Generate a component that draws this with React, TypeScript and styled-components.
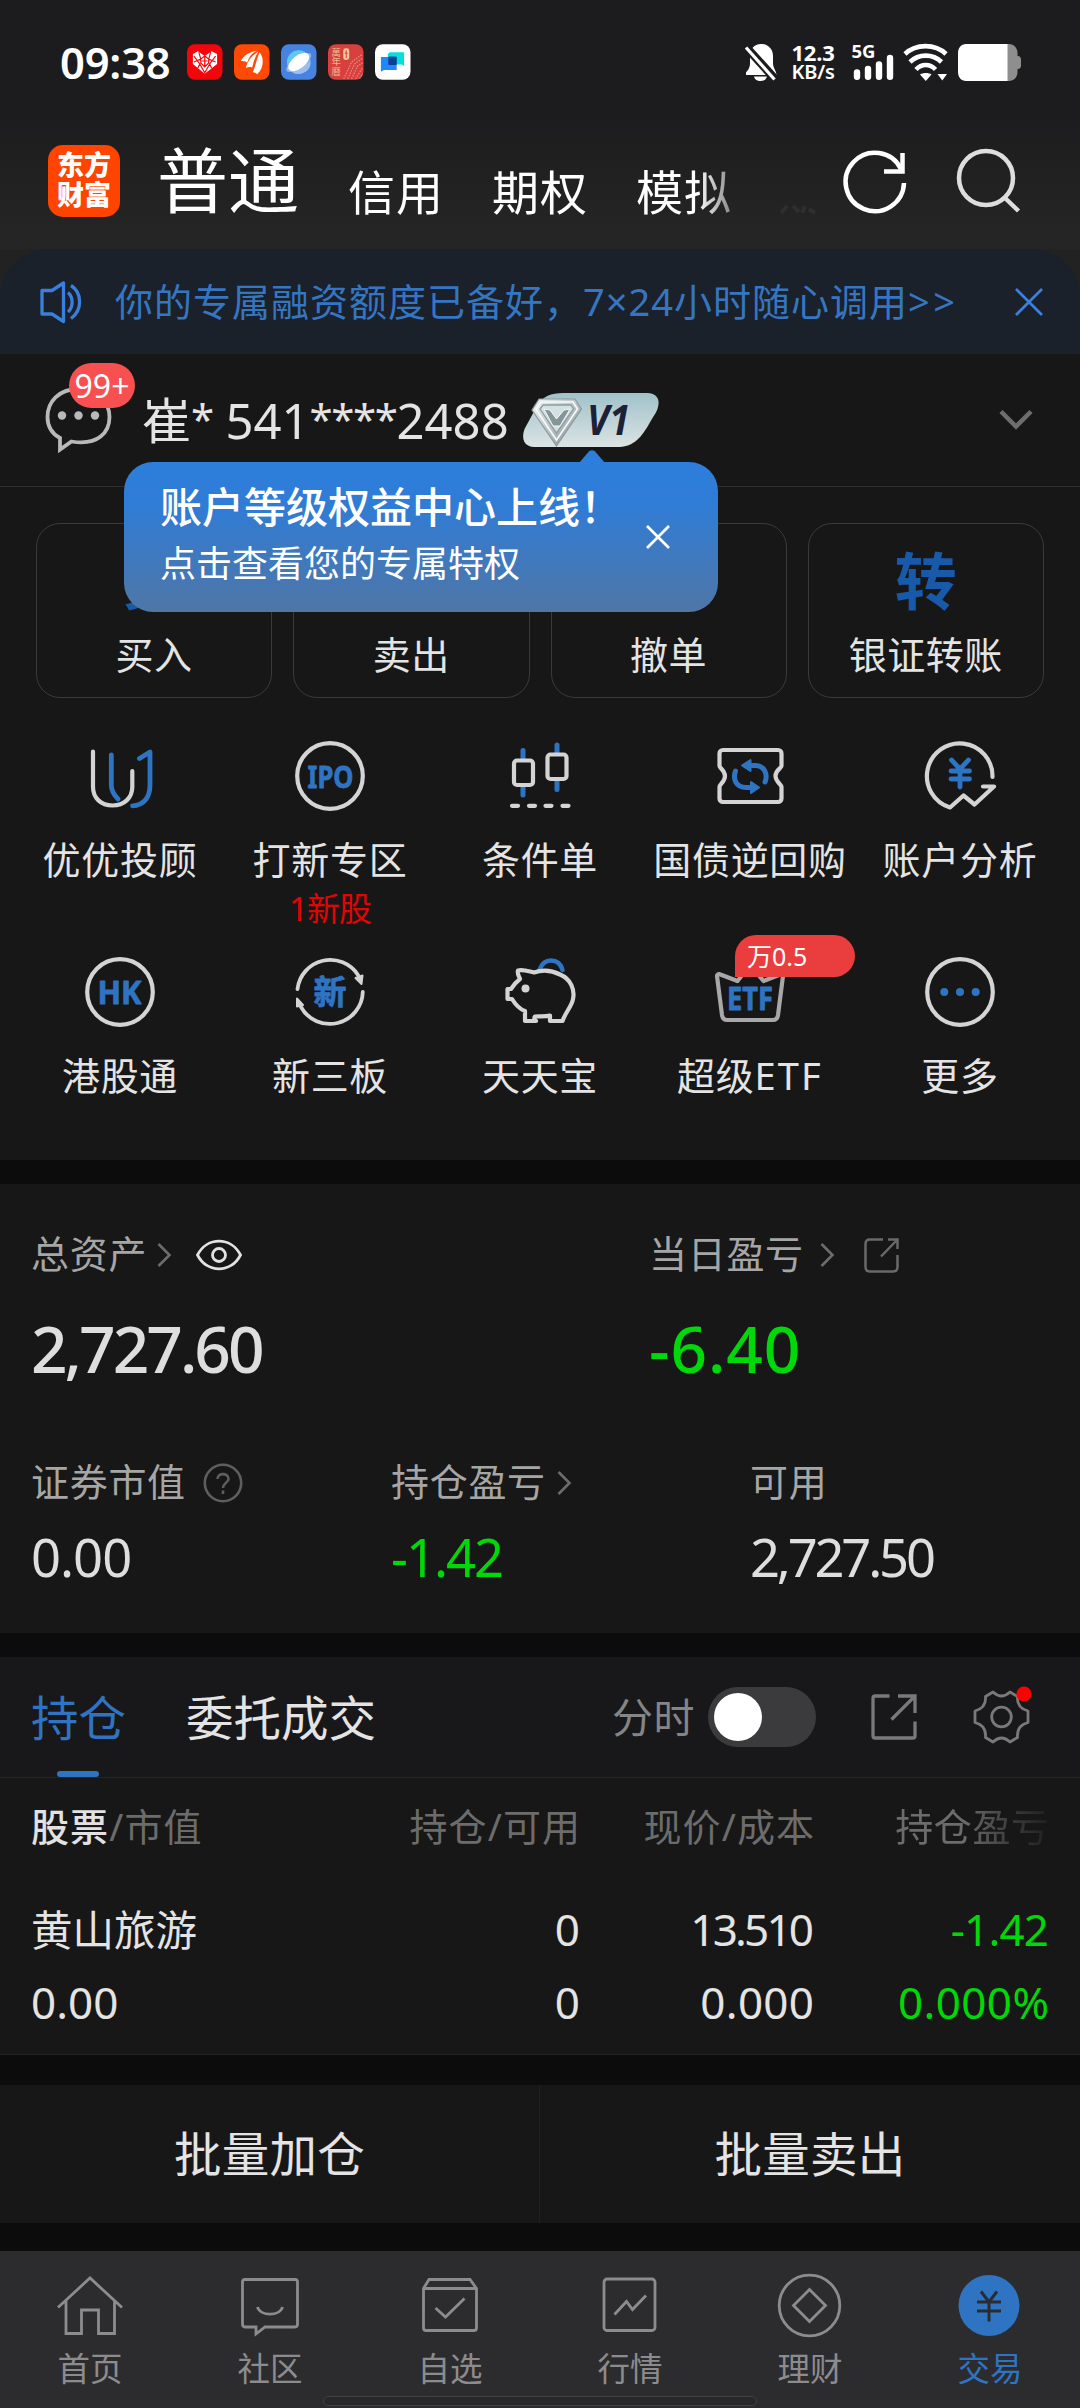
import React from "react";
import styled, { createGlobalStyle } from "styled-components";

const BLUE = "#2f74c2";
const LIGHT = "#e4e4e4";
const GREEN = "#00d80a";
const PANEL = "#171717";

const Global = createGlobalStyle`
  * { box-sizing: border-box; }
  body { margin: 0; background: #0c0c0c; }
  svg { display: block; flex: none; overflow: visible; }
`;

const Screen = styled.div`
  width: 1080px;
  height: 2408px;
  overflow: hidden;
  display: flex;
  flex-direction: column;
  background: #0c0c0c;
  font-family: "Noto Sans", "Noto Sans CJK SC", sans-serif;
  color: ${LIGHT};
  white-space: nowrap;
`;

const Txt = styled.span<{ $size: number; $color?: string; $ls?: number; $weight?: number }>`
  font-size: ${(p) => p.$size}px;
  line-height: ${(p) => Math.round(p.$size * 1.3)}px;
  color: ${(p) => p.$color ?? "inherit"};
  letter-spacing: ${(p) => p.$ls ?? 0}px;
  font-weight: ${(p) => p.$weight ?? 400};
`;

/* ---------- top area ---------- */
const Top = styled.header`
  height: 249px;
  flex: none;
  background: linear-gradient(#1c1c1e 0, #1c1c1e 110px, #252525 235px, #252525 100%);
`;

const StatusBar = styled.div`
  height: 124px;
  padding: 0 59px 0 60px;
  display: flex;
  align-items: center;
`;

const Clock = styled.div`
  width: 127px;
  font-size: 43.5px;
  font-weight: 600;
  line-height: 56px;
  letter-spacing: -0.2px;
  color: #fff;
`;

const AppIcons = styled.div`
  display: flex;
  gap: 11.4px;
`;

const StatusRight = styled.div`
  margin-left: auto;
  display: flex;
  align-items: center;
`;

const NetSpeed = styled.div`
  width: 46px;
  margin: 0 15px 0 13px;
  text-align: center;
  color: #fff;
  font-weight: 700;
  font-size: 22px;
  line-height: 20px;
  letter-spacing: -0.2px;
`;
const Unit = styled.div`
  font-size: 20px;
  font-weight: 600;
`;

const Header = styled.div`
  height: 125px;
  padding-left: 48px;
  padding-right: 60px;
  display: flex;
  align-items: flex-start;
`;

const Logo = styled.div`
  width: 72px;
  height: 72px;
  margin-top: 21px;
  border-radius: 15px;
  background: #ff4400;
  color: #fff;
  font-size: 27px;
  font-weight: 900;
  line-height: 30px;
  text-align: center;
  padding-top: 5px;
`;

const Tabs = styled.div`
  margin-left: 37px;
  width: 663px;
  height: 125px;
  display: flex;
  align-items: flex-start;
  color: #fff;
  mask-image: linear-gradient(90deg, #000 0, #000 540px, rgba(0, 0, 0, 0.45) 575px, rgba(0, 0, 0, 0.05) 605px, rgba(0, 0, 0, 0.05) 100%);
`;
const MainTab = styled.div`
  font-size: 71px;
  line-height: 92px;
  margin: 10px 49px 0 0;
`;
const SubTab = styled.div`
  font-size: 47px;
  letter-spacing: 1px;
  line-height: 60px;
  margin: 38px 48px 0 0;
`;

const HeadIcons = styled.div`
  display: flex;
  gap: 48px;
  margin: 22px 0 0 22px;
`;

const BannerBack = styled.div`
  height: 105px;
  flex: none;
  background: #222;
`;
const Banner = styled.div`
  height: 105px;
  padding: 0 37px 0 40px;
  border-radius: 48px 48px 0 0;
  background: #1b212a;
  display: flex;
  align-items: center;
  justify-content: space-between;
`;
const BannerText = styled.div`
  flex: 1;
  padding: 0 0 2px 33px;
  font-size: 38px;
  letter-spacing: 1px;
  line-height: 50px;
  color: #3576c2;
`;
const Arrows = styled.span`
  letter-spacing: 3.5px;
`;

/* ---------- account ---------- */
const Account = styled.section`
  position: relative;
  height: 133px;
  flex: none;
  padding: 0 47px 0 45px;
  background: ${PANEL};
  border-bottom: 1.5px solid #2e2e2e;
  display: flex;
  align-items: center;
`;
const Bubble = styled.div`
  position: relative;
  width: 97px;
  height: 66px;
`;
const Count = styled.div`
  position: absolute;
  left: 24px;
  top: -24px;
  width: 66px;
  height: 45px;
  border-radius: 23px;
  background: #f85050;
  color: #fff;
  font-size: 32px;
  line-height: 45px;
  text-align: center;
`;
const Name = styled.div`
  width: 379px;
  font-size: 49px;
  line-height: 64px;
  letter-spacing: 0;
  color: ${LIGHT};
`;
const Stars = styled.span`
  font-size: 42px;
  line-height: 1;
  letter-spacing: -1.4px;
  vertical-align: 4px;
`;
const Tooltip = styled.div`
  position: absolute;
  z-index: 2;
  left: 124px;
  top: 108px;
  width: 594px;
  height: 150px;
  padding: 0 48px 0 36px;
  border-radius: 29px;
  background: linear-gradient(#2d7edc 0, #2f7cd6 28%, #4f76a6 100%);
  color: #fff;
  display: flex;
  align-items: center;
  justify-content: space-between;
`;
const TipText = styled.div`
  display: flex;
  flex-direction: column;
  margin-top: -8px;
  gap: 6px;
`;
const TipArrow = styled.svg`
  position: absolute;
  left: 455px;
  top: -12px;
`;

const Actions = styled.section`
  height: 211px;
  flex: none;
  padding: 36px 36px 0;
  background: ${PANEL};
  display: grid;
  grid-template-columns: repeat(4, 1fr);
  column-gap: 21px;
`;
const ActionCard = styled.div`
  height: 175px;
  border: 1.5px solid #3a3a3a;
  border-radius: 24px;
  padding: 19px 0 0;
  display: flex;
  flex-direction: column;
  align-items: center;
`;
const ActionGlyph = styled.div`
  height: 80px;
  font-size: 62px;
  line-height: 76px;
  font-weight: 700;
  color: #1959aa;
`;
const ActionLabel = styled.div`
  margin-top: 6px;
  font-size: 38px;
  letter-spacing: 0.5px;
  line-height: 50px;
`;

const Shortcuts = styled.section`
  height: 462px;
  flex: none;
  padding: 43px 15px 0;
  background: ${PANEL};
  display: grid;
  grid-template-columns: repeat(5, 1fr);
  grid-auto-rows: 216px;
`;
const Shortcut = styled.div`
  position: relative;
  display: flex;
  flex-direction: column;
  align-items: center;
`;
const ShortLabel = styled.div`
  margin-top: 23px;
  font-size: 38px;
  letter-spacing: 0.7px;
  line-height: 50px;
`;
const Latin = styled.span`
  letter-spacing: 2.2px;
`;
const ShortNote = styled.div`
  font-size: 33px;
  line-height: 49px;
  letter-spacing: -1px;
  color: #e00505;
`;
const ShortBadge = styled.div`
  position: absolute;
  left: 90px;
  top: -22px;
  width: 120px;
  height: 42px;
  padding-left: 12px;
  border-radius: 21px 21px 21px 0;
  background: #ea3d3d;
  color: #fff;
  font-size: 25px;
  line-height: 42px;
`;

/* ---------- assets ---------- */
const Assets = styled.section`
  height: 449px;
  flex: none;
  margin-top: 24px;
  padding: 46px 0 0 31px;
  background: ${PANEL};
`;
const AssetRow = styled.div<{ $cols: string }>`
  display: grid;
  grid-template-columns: ${(p) => p.$cols};
`;
const LabelLine = styled.div`
  height: 50px;
  display: flex;
  align-items: center;
`;
const LabelText = styled.span`
  padding-bottom: 4px;
  font-size: 38px;
  line-height: 50px;
  letter-spacing: 0.7px;
  color: #a6a6a6;
`;
const BigValue = styled.div<{ $color?: string; $ls: number }>`
  height: 84px;
  margin: 27px 0 67px;
  font-size: 64px;
  line-height: 84px;
  font-weight: 500;
  letter-spacing: ${(p) => p.$ls}px;
  color: ${(p) => p.$color ?? "#dedede"};
`;
const MidValue = styled.div<{ $color?: string; $ls: number }>`
  height: 70px;
  margin-top: 14px;
  font-size: 52.5px;
  line-height: 70px;
  letter-spacing: ${(p) => p.$ls}px;
  color: ${(p) => p.$color ?? "#dedede"};
`;
const IconGap = styled.span<{ $w: number }>`
  width: ${(p) => p.$w}px;
`;

/* ---------- positions ---------- */
const PosBar = styled.section`
  height: 121px;
  flex: none;
  margin-top: 24px;
  padding: 0 51px 0 31px;
  background: #18181a;
  border-bottom: 1.5px solid #262628;
  display: flex;
  align-items: center;
`;
const PosTab = styled.div<{ $active?: boolean }>`
  height: 120px;
  display: flex;
  flex-direction: column;
  align-items: center;
  justify-content: space-between;
  margin-right: 60px;
  padding-top: 30px;
  font-size: 47.5px;
  line-height: 62px;
  color: ${(p) => (p.$active ? BLUE : LIGHT)};
`;
const Underline = styled.i`
  width: 42px;
  height: 6px;
  margin-right: 2px;
  border-radius: 3px;
  background: ${BLUE};
`;
const Switch = styled.div`
  width: 108px;
  height: 60px;
  margin: 0 55px 0 13px;
  padding: 6px;
  border-radius: 30px;
  background: #3b3b3d;
`;
const Knob = styled.div`
  width: 48px;
  height: 48px;
  border-radius: 50%;
  background: #fff;
`;
const PosTools = styled.div`
  margin-left: auto;
  display: flex;
  align-items: center;
`;
const Table = styled.section`
  height: 277px;
  flex: none;
  padding: 15px 31px 0;
  background: ${PANEL};
  border-bottom: 1.5px solid #222;
`;
const TableRow = styled.div<{ $h: number; $gap?: number }>`
  height: ${(p) => p.$h}px;
  margin-top: ${(p) => p.$gap ?? 0}px;
  display: grid;
  grid-template-columns: 319px 230px 234px 235px;
  align-items: center;
`;
const Cell = styled.div<{ $size: number; $color?: string; $ls?: number; $left?: boolean }>`
  font-size: ${(p) => p.$size}px;
  line-height: ${(p) => Math.round(p.$size * 1.3)}px;
  color: ${(p) => p.$color ?? "#e4e4e4"};
  letter-spacing: ${(p) => p.$ls ?? 0}px;
  margin-right: ${(p) => -Math.max(0, p.$ls ?? 0)}px;
  padding-right: ${(p) => Math.max(0, -(p.$ls ?? 0))}px;
  text-align: ${(p) => (p.$left ? "left" : "right")};
`;
const FadeCell = styled(Cell)`
  mask-image: linear-gradient(90deg, #000 0, #000 150px, rgba(0, 0, 0, 0.45) 195px, rgba(0, 0, 0, 0.1) 100%);
`;
const Strong = styled.span`
  color: #e2e2e2;
  font-weight: 500;
`;

const Batch = styled.section`
  height: 138px;
  flex: none;
  margin-top: 30px;
  display: grid;
  grid-template-columns: 1fr 1fr;
  background: ${PANEL};
`;
const BatchButton = styled.div<{ $divided?: boolean }>`
  display: flex;
  align-items: center;
  justify-content: center;
  font-size: 47.5px;
  line-height: 62px;
  letter-spacing: 0.3px;
  border-right: ${(p) => (p.$divided ? "1px solid #202020" : "none")};
`;

/* ---------- bottom navigation ---------- */
const Nav = styled.nav`
  position: relative;
  height: 157px;
  flex: none;
  margin-top: 28px;
  padding-top: 22px;
  background: #2c2c2e;
  display: grid;
  grid-template-columns: repeat(6, 1fr);
`;
const NavItem = styled.div<{ $active?: boolean }>`
  display: flex;
  flex-direction: column;
  align-items: center;
  gap: 8px;
  color: ${(p) => (p.$active ? BLUE : "#8c8c8e")};
  font-size: 32.5px;
  line-height: 44px;
`;
const HomeBar = styled.div`
  position: absolute;
  left: 323px;
  bottom: 2px;
  width: 434px;
  height: 10px;
  border-radius: 5px;
  background: #282829;
  border: 1.5px solid #414143;
`;

/* ---------- icons ---------- */
const BadgeText = ({ x, y, size, len, children }: { x: number; y: number; size: number; len: number; children: string }) => (
  <text x={x} y={y} fontSize={size} textLength={len} lengthAdjust="spacingAndGlyphs" fontWeight={700} fill={BLUE}
    stroke={BLUE} strokeWidth="0.8" fontFamily='"Noto Sans", "Noto Sans CJK SC", sans-serif'>{children}</text>
);

const Ring = () => <circle cx="35" cy="35" r="32.8" />;

const icons: Record<string, React.ReactNode> = {
  uu: (
    <>
      <path d="M8 10.5V46C8 57 16 64.5 27.5 64.5S47.3 57 47.3 46V30" />
      <path stroke={BLUE} strokeWidth="4.8" d="M26.3 14V44C26.3 50 29 54 33 58M54.5 17.5L65 11V44C65 56 59 64.5 47.5 64.8" />
    </>
  ),
  ipo: (
    <>
      <Ring />
      <BadgeText x={12.5} y={46.5} size={31} len={46}>IPO</BadgeText>
    </>
  ),
  cond: (
    <>
      <path stroke={BLUE} strokeWidth="5" d="M18 9.5V18M18 45V54M52 4V12M52 40V48.5" />
      <rect x="9" y="19.5" width="19" height="24.5" rx="3" />
      <rect x="42.5" y="13.5" width="19" height="24.5" rx="3" />
      <path d="M7 64.8H13M24 64.8H30M40.5 64.8H46.5M57.5 64.8H63.5" />
    </>
  ),
  bond: (
    <>
      <path d="M8 9H63C65 9 66.5 10.5 66.5 12.5V25C66.5 27 60.5 29 60.5 35S66.5 43 66.5 46V57.5C66.5 59.5 65 61 63 61H8C6 61 4.5 59.5 4.5 57.5V46C4.5 43 10 41 10 35S4.5 27 4.5 25V12.5C4.5 10.5 6 9 8 9Z" />
      <path stroke={BLUE} strokeWidth="5" d="M50 41C53 34 50 24.5 40 24.5H33M20.5 30C17.5 38 21 46.5 31 46.5H38" />
      <path fill={BLUE} stroke={BLUE} strokeWidth="2" d="M27 24.5L35.5 19V30ZM44 46.5L36 41V52Z" />
    </>
  ),
  analysis: (
    <>
      <path d="M67.5 36A32.8 32.8 0 1 0 25 66.5L38.5 54.5L49.5 63.5L69 45.5H58" />
      <path stroke={BLUE} strokeWidth="4.8" d="M26.5 19L35 28L43.5 19M35 28V46M26 30H44.5M26 38H44.5" />
    </>
  ),
  hk: (
    <>
      <Ring />
      <BadgeText x={12.5} y={46.5} size={31.5} len={44}>HK</BadgeText>
    </>
  ),
  xsb: (
    <>
      <path strokeWidth="3.8" d="M2.5 32A33 33 0 0 1 63 18M67.8 35A33 33 0 0 1 6 50" />
      <path strokeWidth="2" fill="#d4d4d4" d="M67.5 18.5L66.5 27L60.5 21ZM2 41.5L8 48L2 49.5Z" />
      <BadgeText x={18.5} y={47} size={33} len={33}>新</BadgeText>
    </>
  ),
  pig: (
    <>
      <path stroke={BLUE} strokeWidth="4.5" d="M34.5 13C37 5.5 42 3.5 46 3.5C52 3.5 56 7.5 57.5 13" />
      <path d="M13 13.5C18 12 24 14.5 29 15.5C38 12.5 47 13.5 55 17.5C66 22 70 33 68 42C67 49 60 56 57.5 64H45V58.5C40 60 34 59 30 59.5C29 61 29 63 31 64H20V54C14 52 9.5 46 7 42H2.5V32H6C8 29 11 25 15 22C14 19 12 17 13 13.5Z" />
      <circle cx="20.5" cy="31.5" r="4" fill="#d4d4d4" stroke="none" />
    </>
  ),
  etf: (
    <>
      <path stroke="#a8a8a8" d="M4 17L22.5 24L35 8L48.5 24L66.5 17C67.5 17 68 18 68 19L63 58C62.5 61 61 63 58 63H12C9 63 7.5 61 7 58L2 19C2 18 3 17 4 17Z" />
      <BadgeText x={12} y={52.5} size={31.5} len={46}>ETF</BadgeText>
    </>
  ),
  more: (
    <>
      <Ring />
      <g fill={BLUE} stroke="none">
        <circle cx="19.3" cy="35" r="4" />
        <circle cx="35" cy="35" r="4" />
        <circle cx="50.7" cy="35" r="4" />
      </g>
    </>
  ),
};

const ShortIcon = ({ name }: { name: string }) => (
  <svg width="70" height="70" viewBox="0 0 70 70" fill="none" stroke="#d4d4d4" strokeWidth="4.2" strokeLinecap="round" strokeLinejoin="round">
    {icons[name]}
  </svg>
);

const Chevron = () => (
  <svg width="14" height="24" viewBox="0 0 14 24" fill="none" stroke="#6c6c6c" strokeWidth="2.6">
    <path d="M1.5 1L12.5 12L1.5 23" />
  </svg>
);

const navIcons: Record<string, React.ReactNode> = {
  home: <path d="M1 34.5L33 5L65 34.5M9 28V60.5H24.5V37H41.5V60.5H57.5V28" />,
  social: (
    <>
      <path d="M8 6.5H58C60 6.5 60.5 7.5 60.5 9V51C60.5 53 60 54 58 54H28L19 61V54H8C6 54 5.5 53 5.5 51V9C5.5 7.5 6 6.5 8 6.5Z" />
      <path d="M20.5 34C23 43.5 43 43.5 45.5 34" />
    </>
  ),
  pick: <path d="M6.5 15.5L12 6.5H53L59.5 15.5V55C59.5 56.5 59 57.5 57 57.5H9C7 57.5 6.5 56.5 6.5 55ZM6.5 15.5H59.5M18.5 35L28.5 44L47.5 25.5" />,
  market: (
    <>
      <rect x="7" y="6" width="51" height="51.5" rx="3" />
      <path d="M17.5 41.5L29.5 28.5L35.5 36.5L49 22.5" />
    </>
  ),
  wealth: (
    <>
      <circle cx="32.5" cy="32.5" r="30.3" />
      <path d="M32.5 16.5L48.5 32.5L32.5 48.5L16.5 32.5Z" />
    </>
  ),
  trade: (
    <>
      <circle cx="32" cy="32.5" r="30.5" fill="#2f74c2" stroke="none" />
      <path stroke="#2a2c30" strokeWidth="3" d="M24 18.5L32 29L40 18.5M32 29V48.5M20 29H44M20 38H44" />
    </>
  ),
};

const StatusAppIcons = () => (
  <AppIcons>
    <svg width="35.5" height="36" viewBox="0 0 36 36">
      <rect width="36" height="36" rx="8" fill="#f2060c" />
      <path fill="#fff" d="M18 30L6 20V10L11 7L18 12L25 7L30.5 10V20Z" />
      <path stroke="#f2060c" strokeWidth="1.2" fill="none" d="M7 12L13 20L11 24M29 12L23 20L25 24M12 8L14 15L7 18M24 8L22 15L29 18M14 15L18 12L22 15V19L18 23L14 19ZM13 20L18 29L23 20M18 13V22M15 17H21" />
    </svg>
    <svg width="35.5" height="36" viewBox="0 0 36 36">
      <rect width="36" height="36" rx="8" fill="#ff4a06" />
      <path fill="#fff" d="M7 17C10 11 16 8 23 6.5C17 10 15 14 13.5 18.5C11 17 9 17 7 17ZM12 24C14 16 19 11 25 7C21 13 20 18 18.5 23.5C16 23 14 23 12 24ZM19 28.5C22 22 23 14 26 8C31 15 30 24 23.5 30.5C22.5 29 21 28.5 19 28.5Z" />
    </svg>
    <svg width="35.5" height="36" viewBox="0 0 36 36">
      <rect width="36" height="36" rx="8" fill="#4682e0" />
      <circle cx="18" cy="18" r="12" fill="#62c6f5" />
      <path d="M9 26A12 12 0 0 0 30 18Z" fill="#9dbcf0" />
      <ellipse cx="18" cy="18.5" rx="15" ry="5.5" transform="rotate(-35 18 18.5)" fill="#8fb4ee" />
      <ellipse cx="18" cy="18" rx="12.5" ry="6.5" transform="rotate(-38 18 18)" fill="#fff" />
    </svg>
    <svg width="35.5" height="36" viewBox="0 0 36 36">
      <rect width="36" height="36" rx="8" fill="#d8403f" />
      <g fill="#f0b890" fontFamily='"Noto Sans CJK TC", sans-serif' fontSize="9.5">
        <text x="3.5" y="12">萬</text>
        <text x="3.5" y="21.5">年</text>
        <text x="3.5" y="31.5">曆</text>
      </g>
      <rect x="15.5" y="4" width="6" height="12" rx="2.5" fill="#f2c79b" />
      <path d="M18.5 6V14M17 9H20" stroke="#d8403f" strokeWidth="1" />
      <path d="M16 35L24 18L35 10M20 35L27 20L35 14M24 35L30 22L35 19M28 35L35 24M32 35L35 30" stroke="#ec8f78" strokeWidth="1.2" strokeDasharray="1.5 1.2" fill="none" />
    </svg>
    <svg width="35.5" height="36" viewBox="0 0 36 36">
      <rect width="36" height="36" rx="8" fill="#fff" />
      <path d="M15 8H29.5V22L27 20.5H13V10Z" fill="#06dede" />
      <path d="M6 13H22V26H9L6 28Z" fill="#2387f8" />
      <rect x="13.5" y="12.5" width="8.5" height="8.5" rx="1" fill="#0a3f96" />
    </svg>
  </AppIcons>
);

const actions = [
  { label: "买入", glyph: "买" },
  { label: "卖出" },
  { label: "撤单" },
  { label: "银证转账", glyph: "转" },
];

const shortcuts: { label: string; latin?: string; icon: string; note?: string; badge?: string }[] = [
  { label: "优优投顾", icon: "uu" },
  { label: "打新专区", icon: "ipo", note: "1新股" },
  { label: "条件单", icon: "cond" },
  { label: "国债逆回购", icon: "bond" },
  { label: "账户分析", icon: "analysis" },
  { label: "港股通", icon: "hk" },
  { label: "新三板", icon: "xsb" },
  { label: "天天宝", icon: "pig" },
  { label: "超级", latin: "ETF", icon: "etf", badge: "万0.5" },
  { label: "更多", icon: "more" },
];

const navItems = [
  { label: "首页", icon: "home" },
  { label: "社区", icon: "social" },
  { label: "自选", icon: "pick" },
  { label: "行情", icon: "market" },
  { label: "理财", icon: "wealth" },
  { label: "交易", icon: "trade", active: true },
];

export default function App() {
  return (
    <Screen>
      <Global />
      <Top>
        <StatusBar>
          <Clock>09:38</Clock>
          <StatusAppIcons />
          <StatusRight>
            <svg width="32" height="37" viewBox="0 0 32 37">
              <path fill="#fff" d="M16 0C23 0 28 5 28 12V19C28 24 31.5 27 31.5 31H1V28.5C3 26 5 24 5 19V12C5 5 9 0 16 0ZM9 32.5H22C21 36 18.5 37 15.5 37S10 36 9 32.5Z" />
              <path stroke="#1c1c1e" strokeWidth="8.5" d="M1 3L31 36" />
              <path stroke="#fff" strokeWidth="3.2" d="M1 3.5L29.5 35.5" />
            </svg>
            <NetSpeed>
              12.3
              <Unit>KB/s</Unit>
            </NetSpeed>
            <svg width="47" height="38" viewBox="0 0 47 38">
              <text x="0.5" y="15" fontSize="18.5" fontWeight="700" fill="#fff" textLength="24" lengthAdjust="spacingAndGlyphs">5G</text>
              <path stroke="#fff" strokeWidth="6.4" strokeLinecap="round" d="M6 29.5V33.8M17 26V33.8M28 21.5V33.8M39 15V33.8" />
            </svg>
            <svg width="50" height="37" viewBox="0 0 50 37" style={{ marginLeft: 5 }}>
              <g fill="none" stroke="#fff" strokeWidth="4.6" strokeLinecap="butt">
                <path d="M2 10C13 -0.5 32 -0.5 43 10" />
                <path d="M7 18C15.5 9.5 30 9.5 38.5 18" />
                <path d="M13 25.5C18.500 19.5 27 19.5 32.500 25.5" />
              </g>
              <path fill="#fff" d="M17 30.5C20 28.5 26 28.5 28.5 30.5L22.800 37ZM34.5 30H44L39.3 36.5Z" />
            </svg>
            <svg width="64" height="37" viewBox="0 0 64 37" style={{ marginLeft: 4 }}>
              <path fill="#8e8e8e" d="M48 0H52C57 0 60.5 4 60.5 9V12H61C63 12 64 14 64 15.5V21.5C64 23.5 63 25 61 25H60.5V28C60.5 33 57 37 52 37H48Z" />
              <path fill="#fff" d="M50.5 0H9C4 0 1 4 1 9V28C1 33 4 37 9 37H50.5Z" />
            </svg>
          </StatusRight>
        </StatusBar>
        <Header>
          <Logo>东方<br />财富</Logo>
          <Tabs>
            <MainTab>普通</MainTab>
            <SubTab>信用</SubTab>
            <SubTab>期权</SubTab>
            <SubTab>模拟</SubTab>
            <svg width="36" height="10" viewBox="0 0 36 10" style={{ marginTop: 81 }}>
              <path d="M7 1L1 8M13 1L19 7M25 1L22 8M29 4L35 8" stroke="#fff" strokeWidth="4" />
            </svg>
          </Tabs>
          <HeadIcons>
            <svg width="66" height="72" viewBox="843 146 66 72" fill="none" stroke="#fff" strokeWidth="4.5">
              <path d="M905 183A29.2 29.2 0 1 1 902 169" />
              <path d="M903.5 153V171.5H885" />
            </svg>
            <svg width="64" height="72" viewBox="957 146 64 72" fill="none" stroke="#dedede" strokeWidth="4.5">
              <circle cx="987" cy="178" r="27" />
              <path d="M1005 197L1019.5 211" />
            </svg>
          </HeadIcons>
        </Header>
      </Top>

      <BannerBack>
        <Banner>
          <svg width="42" height="42" viewBox="40 280 42 42" fill="none" stroke="#3a7fdb" strokeWidth="3.3" strokeLinejoin="round">
            <path d="M42 289.5H52L63.5 282V320.5L52 313H42Z" />
            <path d="M68 291.5C73.5 296.5 73.5 306 68 311M71 284.5C82.5 292 82.5 309 71 317.5" />
          </svg>
          <BannerText>
            你的专属融资额度已备好，7×24小时随心调用<Arrows>&gt;&gt;</Arrows>
          </BannerText>
          <svg width="28" height="28" viewBox="0 0 28 28" stroke="#3a80dd" strokeWidth="2.7">
            <path d="M1 1L27 27M27 1L1 27" />
          </svg>
        </Banner>
      </BannerBack>

      <Account>
        <Bubble>
          <svg width="67" height="66" viewBox="44.5 387 67 66" fill="none" stroke="#b9b9b9" strokeWidth="3.8">
            <path d="M78 389C58 389 47 402 47 417C47 427 52 434 59.5 438V449.5L71 441.5C98 446 109 432 109 417C109 402 97 389 78 389Z" />
            <g fill="#b9b9b9" stroke="none">
              <circle cx="61.5" cy="415.5" r="4.2" />
              <circle cx="78" cy="415.5" r="4.2" />
              <circle cx="94.5" cy="415.5" r="4.2" />
            </g>
          </svg>
          <Count>99+</Count>
        </Bubble>
        <Name>
          崔<Stars>*</Stars> 541<Stars>****</Stars>2488
        </Name>
        <svg width="140" height="56" viewBox="522 392 140 56">
          <defs>
            <linearGradient id="level" x1="0" y1="0" x2="0" y2="1">
              <stop offset="0" stopColor="#a0c2ca" />
              <stop offset="1" stopColor="#dbe3e4" />
            </linearGradient>
            <linearGradient id="gem" x1="0" y1="0" x2="1" y2="1">
              <stop offset="0" stopColor="#f2f7f8" />
              <stop offset="0.6" stopColor="#aeb8bb" />
              <stop offset="1" stopColor="#7d888d" />
            </linearGradient>
          </defs>
          <path fill="url(#level)" d="M564 393H648C657 393 661.5 399 659 407C658 412 654 417 650 424C641 440 633 447 618 447H536C525 447 522 439 525.5 429L538 406C544 396 552 393 564 393Z" />
          <path fill="url(#gem)" stroke="#8b979b" strokeWidth="1.2" d="M540 399H576L582.5 409L557.5 446L533 410Z" />
          <path fill="none" stroke="#f6fafa" strokeWidth="1.6" d="M542 402H574L578.5 409L557.5 440L537 409.5Z" />
          <path fill="#d4e1e3" stroke="#8f9ca0" strokeWidth="1.3" d="M544 405H572L574.5 409L557.5 433L541 409Z" />
          <path fill="#85969b" stroke="#f4f8f8" strokeWidth="1" d="M545 409L551 410L557.5 419L565 410L571 409L561 426H554Z" />
          <text x="588" y="435" fontSize="41" fontWeight="700" fontStyle="italic" fill="#1d2136" textLength="43" lengthAdjust="spacingAndGlyphs">V1</text>
        </svg>
        <svg width="34" height="22" viewBox="0 0 34 22" fill="none" stroke="#6e6e6e" strokeWidth="4.5" style={{ marginLeft: "auto" }}>
          <path d="M2 2.5L17 17.5L32 2.5" />
        </svg>
        <Tooltip>
          <TipArrow width="26" height="13" viewBox="0 0 26 13">
            <path fill="#2d7edc" d="M0 13L9 2.5C11 -0.5 15 -0.5 17 2.5L26 13Z" />
          </TipArrow>
          <TipText>
            <Txt $size={42} $weight={500}>账户等级权益中心上线！</Txt>
            <Txt $size={36}>点击查看您的专属特权</Txt>
          </TipText>
          <svg width="24" height="24" viewBox="0 0 24 24" stroke="#fff" strokeWidth="2.7">
            <path d="M1 1L23 23M23 1L1 23" />
          </svg>
        </Tooltip>
      </Account>

      <Actions>
        {actions.map((a) => (
          <ActionCard key={a.label}>
            <ActionGlyph>{a.glyph}</ActionGlyph>
            <ActionLabel>{a.label}</ActionLabel>
          </ActionCard>
        ))}
      </Actions>

      <Shortcuts>
        {shortcuts.map((s) => (
          <Shortcut key={s.label}>
            <ShortIcon name={s.icon} />
            <ShortLabel>
              {s.label}
              {s.latin && <Latin>{s.latin}</Latin>}
            </ShortLabel>
            {s.note && <ShortNote>{s.note}</ShortNote>}
            {s.badge && <ShortBadge>{s.badge}</ShortBadge>}
          </Shortcut>
        ))}
      </Shortcuts>

      <Assets>
        <AssetRow $cols="618px 1fr">
          <div>
            <LabelLine>
              <LabelText>总资产</LabelText>
              <IconGap $w={10} />
              <Chevron />
              <IconGap $w={25} />
              <svg width="46" height="32" viewBox="0 0 46 32" fill="none" stroke="#e2e2e2" strokeWidth="2.8">
                <path d="M1.5 16C11 -2.5 35 -2.5 44.5 16C35 34.5 11 34.5 1.5 16Z" />
                <circle cx="23" cy="16" r="6.5" />
              </svg>
            </LabelLine>
            <BigValue $ls={-3}>2,727.60</BigValue>
          </div>
          <div>
            <LabelLine>
              <LabelText>当日盈亏</LabelText>
              <IconGap $w={16} />
              <Chevron />
              <IconGap $w={30} />
              <svg width="35" height="35" viewBox="0 0 35 35" fill="none" stroke="#6a6a6a" strokeWidth="2.5">
                <path d="M19 1.5H6C3 1.5 1.5 3 1.5 6V29C1.5 32 3 33.5 6 33.5H29C32 33.5 33.5 32 33.5 29V17M17 18.5L32.5 2.5M24 1.5H33.5V11" />
              </svg>
            </LabelLine>
            <BigValue $ls={0.9} $color={GREEN}>-6.40</BigValue>
          </div>
        </AssetRow>
        <AssetRow $cols="360px 359px 1fr">
          <div>
            <LabelLine>
              <LabelText>证券市值</LabelText>
              <IconGap $w={17} />
              <svg width="40" height="40" viewBox="0 0 40 40" fill="none" stroke="#5e5e5e" strokeWidth="2.6">
                <circle cx="20" cy="20" r="18.2" />
                <path d="M14.5 16C14.5 9.5 25.5 9.5 25.5 16C25.5 19.5 20 20 20 25M20 27.5V31" />
              </svg>
            </LabelLine>
            <MidValue $ls={-1}>0.00</MidValue>
          </div>
          <div>
            <LabelLine>
              <LabelText>持仓盈亏</LabelText>
              <IconGap $w={11} />
              <Chevron />
            </LabelLine>
            <MidValue $ls={-2} $color={GREEN}>-1.42</MidValue>
          </div>
          <div>
            <LabelLine>
              <LabelText>可用</LabelText>
            </LabelLine>
            <MidValue $ls={-3.2}>2,727.50</MidValue>
          </div>
        </AssetRow>
      </Assets>

      <PosBar>
        <PosTab $active>
          持仓
          <Underline />
        </PosTab>
        <PosTab>委托成交</PosTab>
        <PosTools>
          <Txt $size={41} $ls={0.5} $color="#858585">分时</Txt>
          <Switch>
            <Knob />
          </Switch>
          <svg width="46" height="46" viewBox="0 0 46 46" fill="none" stroke="#797979" strokeWidth="3.3">
            <path d="M18.5 2H4C2.5 2 2 2.5 2 4V42C2 43.5 2.5 44 4 44H42C43.5 44 44 43.5 44 42V27.5M20.5 25.5L43 3M27 2H44V19" />
          </svg>
          <svg width="55" height="54" viewBox="974.5 1690.5 55 54" fill="none" stroke="#797979" strokeWidth="2.8" strokeLinejoin="round" style={{ marginLeft: 57 }}>
            <path d="M993.5 1692.5Q1002 1700.5 1010.5 1692.5L1018 1697Q1017 1708.5 1028.5 1711.5V1723Q1017 1726 1018 1738L1010.5 1742.5Q1002 1734.5 993.5 1742.5L986 1738Q987 1726 975.5 1723V1711.5Q987 1708.5 986 1697Z" />
            <circle cx="1002" cy="1717.5" r="9.8" />
            <circle cx="1024.5" cy="1694.5" r="7.6" fill="#f00" stroke="none" />
          </svg>
        </PosTools>
      </PosBar>
      <Table>
        <TableRow $h={66}>
          <Cell $size={38} $color="#6c6c6c" $ls={1.1} $left>
            <Strong>股票</Strong>/市值
          </Cell>
          <Cell $size={38} $color="#6c6c6c" $ls={1.1}>持仓/可用</Cell>
          <Cell $size={38} $color="#6c6c6c" $ls={1.1}>现价/成本</Cell>
          <FadeCell $size={38} $color="#6c6c6c" $ls={0.6}>持仓盈亏</FadeCell>
        </TableRow>
        <TableRow $h={73} $gap={34}>
          <Cell $size={41.5} $left>黄山旅游</Cell>
          <Cell $size={44}>0</Cell>
          <Cell $size={44} $ls={-2.8}>13.510</Cell>
          <Cell $size={44} $ls={-0.8} $color={GREEN}>-1.42</Cell>
        </TableRow>
        <TableRow $h={73}>
          <Cell $size={44} $left>0.00</Cell>
          <Cell $size={44}>0</Cell>
          <Cell $size={44} $ls={0.3}>0.000</Cell>
          <Cell $size={44} $ls={0.4} $color={GREEN}>0.000%</Cell>
        </TableRow>
      </Table>

      <Batch>
        <BatchButton $divided>批量加仓</BatchButton>
        <BatchButton>批量卖出</BatchButton>
      </Batch>

      <Nav>
        {navItems.map((n) => (
          <NavItem key={n.label} $active={n.active}>
            <svg width="66" height="66" viewBox="0 0 66 66" fill="none" stroke="#8c8c8e" strokeWidth="2.8">
              {navIcons[n.icon]}
            </svg>
            {n.label}
          </NavItem>
        ))}
        <HomeBar />
      </Nav>
    </Screen>
  );
}
